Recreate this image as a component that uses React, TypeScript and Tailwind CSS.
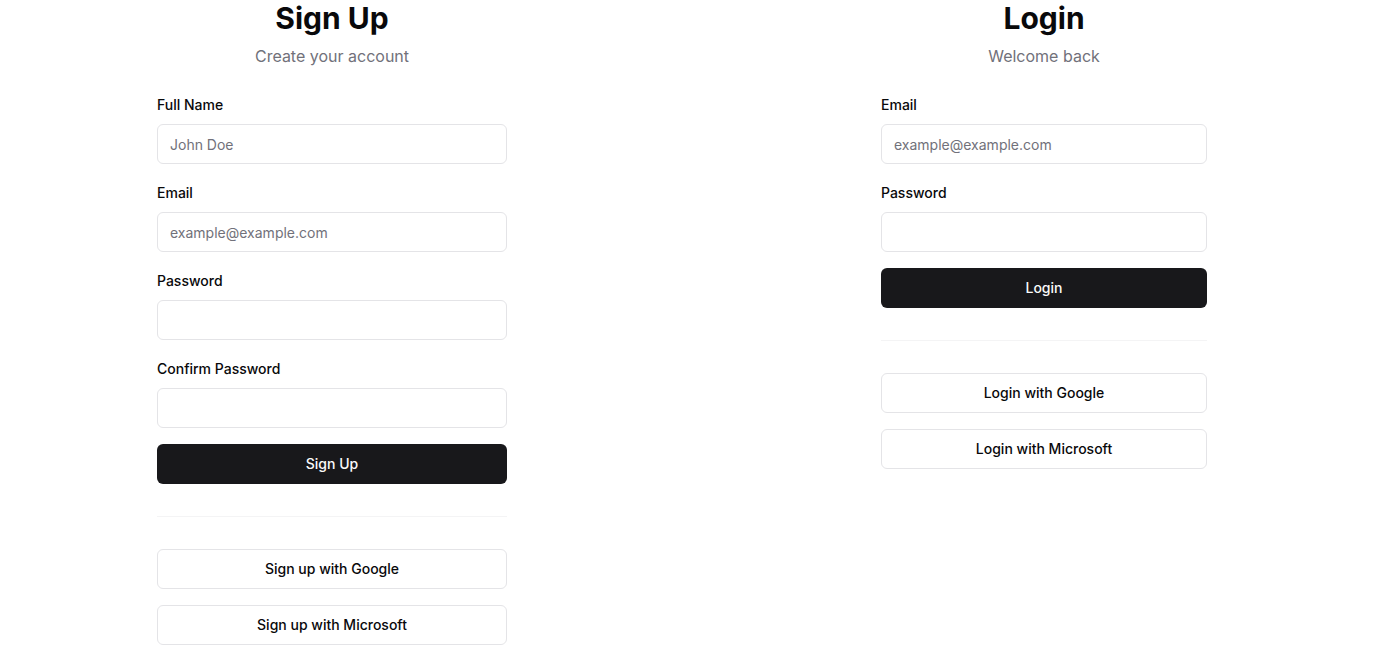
import React from "react";

function Field({ label, placeholder, type = "text" }: { label: string; placeholder?: string; type?: string }) {
  return (
    <div className="flex flex-col">
      <label className="mt-px text-sm font-medium leading-5 text-[#09090b]">{label}</label>
      <input
        type={type}
        placeholder={placeholder}
        className="mt-[9px] h-10 w-full rounded-md border border-[#e4e4e7] bg-white px-3 text-sm text-[#09090b] placeholder:text-[#71717a] outline-none"
      />
    </div>
  );
}

function PrimaryButton({ children }: { children: React.ReactNode }) {
  return (
    <button className="h-10 w-full rounded-md bg-[#18181b] text-sm font-medium text-[#fafafa]">{children}</button>
  );
}

function OutlineButton({ children }: { children: React.ReactNode }) {
  return (
    <button className="h-10 w-full rounded-md border border-[#e4e4e7] bg-white text-sm font-medium text-[#09090b]">
      {children}
    </button>
  );
}

export default function App() {
  return (
    <div className="grid min-h-[645px] grid-cols-2 gap-12 bg-white font-['Inter',sans-serif]">
      <div className="flex flex-col items-center">
        <h1 className="text-3xl font-bold leading-9 text-[#09090b]">Sign Up</h1>
        <p className="mt-2 text-base leading-6 text-[#71717a]">Create your account</p>
        <div className="mt-[26px] flex w-[350px] flex-col">
          <div className="flex flex-col gap-[18px]">
            <Field label="Full Name" placeholder="John Doe" />
            <Field label="Email" placeholder="example@example.com" />
            <Field label="Password" type="password" />
            <Field label="Confirm Password" type="password" />
          </div>
          <div className="mt-4">
            <PrimaryButton>Sign Up</PrimaryButton>
          </div>
          <div className="mt-8 h-px w-full bg-[#f4f4f5]" />
          <div className="mt-8 flex flex-col gap-4">
            <OutlineButton>Sign up with Google</OutlineButton>
            <OutlineButton>Sign up with Microsoft</OutlineButton>
          </div>
        </div>
      </div>
      <div className="flex flex-col items-center">
        <h1 className="text-3xl font-bold leading-9 text-[#09090b]">Login</h1>
        <p className="mt-2 text-base leading-6 text-[#71717a]">Welcome back</p>
        <div className="mt-[26px] flex w-[326px] flex-col">
          <div className="flex flex-col gap-[18px]">
            <Field label="Email" placeholder="example@example.com" />
            <Field label="Password" type="password" />
          </div>
          <div className="mt-4">
            <PrimaryButton>Login</PrimaryButton>
          </div>
          <div className="mt-8 h-px w-full bg-[#f4f4f5]" />
          <div className="mt-8 flex flex-col gap-4">
            <OutlineButton>Login with Google</OutlineButton>
            <OutlineButton>Login with Microsoft</OutlineButton>
          </div>
        </div>
      </div>
    </div>
  );
}
